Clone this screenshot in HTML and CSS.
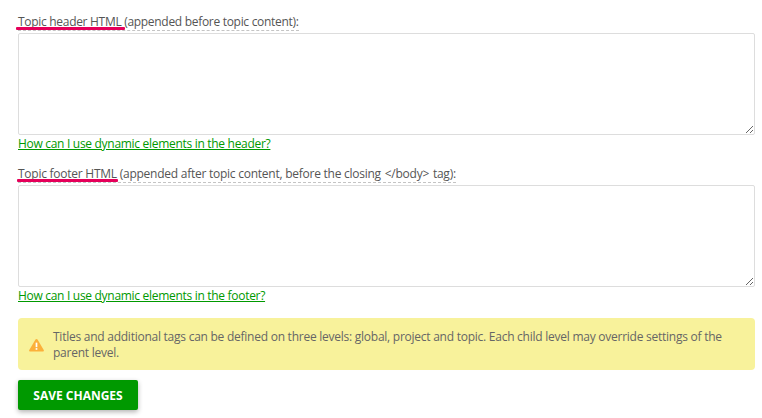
FILE: index.html
```html
<!DOCTYPE html>
<html lang="en">
<head>
<meta charset="utf-8">
<title>Topic settings</title>
<link rel="stylesheet" href="styles.css">
</head>
<body>
<form class="form">
  <div class="field">
    <label class="label"><span class="mark mark-header">Topic header HTML</span> (appended before topic content):</label>
    <textarea class="input"></textarea>
    <a class="help" href="#">How can I use dynamic elements in the header?</a>
  </div>
  <div class="field">
    <label class="label label-long"><span class="mark mark-footer">Topic footer HTML</span> (appended after topic content, before the closing <span class="tag">&lt;/body&gt;</span> tag):</label>
    <textarea class="input"></textarea>
    <a class="help" href="#">How can I use dynamic elements in the footer?</a>
  </div>
  <div class="notice">
    <svg class="notice-icon" width="15" height="14" viewBox="0 0 16 14"><path d="M8 .5c.5 0 .9.3 1.100.7l6.600 11c.5.8-.1 1.800-1 1.800H1.300c-.9 0-1.500-1-1-1.800l6.600-11C7.100.8 7.500.5 8 .5z" fill="#fbb03b"/><rect x="7.100" y="4.500" width="1.800" height="4.800" fill="#fff"/><rect x="7.100" y="10.300" width="1.800" height="1.800" fill="#fff"/></svg>
    <p class="notice-text">Titles and additional tags can be defined on three levels: global, project and topic. Each child level may override settings of the parent level.</p>
  </div>
  <button class="save" type="button">SAVE CHANGES</button>
</form>
</body>
</html>
```
FILE: styles.css
```css
* { box-sizing: border-box; }
html, body { margin: 0; background: #fff; }
body { font-family: "Open Sans", "Noto Sans", sans-serif; font-size: 12px; letter-spacing: -0.3px; color: #555; height: 418px; overflow: hidden; }
.form { display: flex; flex-direction: column; padding: 14px 7px 0 18px; }
.field { display: flex; flex-direction: column; align-items: flex-start; margin-bottom: 14px; }
.label { display: block; line-height: 16px; height: 17px; border-bottom: 1px dashed #c4c4c4; margin-bottom: 2px; position: relative; }
.label-long { letter-spacing: -0.25px; }
.tag { margin: 0 1px; }
.mark { position: relative; }
.mark::after { content: ""; position: absolute; top: 14px; height: 2.5px; background: #e5005a; border-radius: 1px; }
.mark-header::after { left: -2px; right: -4px; }
.mark-footer::after { left: -1px; right: -1px; }
.input { display: block; width: 100%; height: 102px; border: 1px solid #ddd; border-radius: 2px; background: #fff; margin: 0; padding: 4px; }
.help { color: #090; line-height: 17px; margin-top: 0; text-decoration: underline; }
.notice { display: flex; align-items: center; gap: 9px; background: #f8f29b; border-radius: 4px; height: 52px; padding: 1px 30px 0 11px; }
.notice-icon { flex: none; }
.notice-text { margin: 0; line-height: 16px; color: #666; letter-spacing: -0.25px; }
.save { align-self: flex-start; width: 120px; height: 30px; margin-top: 10px; padding: 1px 0 0; border: 0; border-radius: 2px; background: #090; color: #fff; font: 700 12px "Open Sans", sans-serif; letter-spacing: 0; box-shadow: 0 2px 5px rgba(0,0,0,.3); }
```
